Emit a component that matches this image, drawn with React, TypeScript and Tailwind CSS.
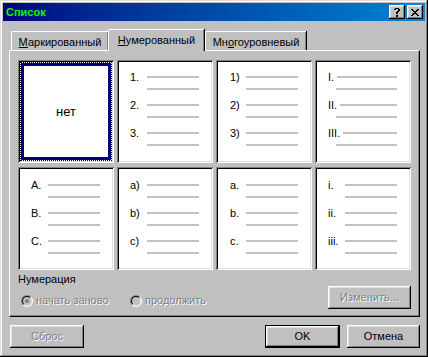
import React from "react";

const raised =
  "shadow-[inset_-1px_-1px_#000,inset_1px_1px_#fff,inset_-2px_-2px_#808080,inset_2px_2px_#dfdfdf]";
const sunken =
  "shadow-[inset_1px_1px_#808080,inset_-1px_-1px_#fff,inset_2px_2px_#000,inset_-2px_-2px_#dfdfdf]";

type CellDef = { labels: string[]; kind: "fixed" | "fixed14" | "roman" };

const cells: CellDef[] = [
  { labels: [], kind: "fixed" },
  { labels: ["1.", "2.", "3."], kind: "fixed" },
  { labels: ["1)", "2)", "3)"], kind: "fixed14" },
  { labels: ["I.", "II.", "III."], kind: "roman" },
  { labels: ["A.", "B.", "C."], kind: "fixed" },
  { labels: ["a)", "b)", "c)"], kind: "fixed" },
  { labels: ["a.", "b.", "c."], kind: "fixed14" },
  { labels: ["i.", "ii.", "iii."], kind: "fixed" },
];

function Bar() {
  return <div className="h-[2px] w-[52px] bg-[#c0c0c0]" />;
}

function ListCell({ def, top }: { def: CellDef; top: boolean }) {
  const pad =
    def.kind === "fixed14"
      ? top
        ? "pl-[14px] pt-[11px]"
        : "pl-[14px] pt-[12px]"
      : top
        ? "pl-[13px] pt-[11px]"
        : "pl-[13px] pt-[12px]";
  return (
    <div className={`h-[103px] w-[96px] bg-white ${sunken} ${pad}`}>
      <div className="flex flex-col gap-[4px]">
        {def.labels.map((l) => (
          <div key={l} className="flex flex-col">
            {def.kind === "roman" ? (
              <>
                <div className="flex h-[12px] w-[69px] items-center">
                  <span className="text-[11px] leading-[12px] text-black">{l}</span>
                  <div className="ml-[3px] h-[2px] flex-1 bg-[#c0c0c0]" />
                </div>
                <div className="flex h-[12px] w-[69px] items-center pl-[8px]">
                  <div className="h-[2px] flex-1 bg-[#c0c0c0]" />
                </div>
              </>
            ) : (
              <>
                <div className="flex h-[12px] items-center">
                  <span
                    className={
                      def.kind === "fixed14"
                        ? "w-[16px] text-[11px] leading-[12px] text-black"
                        : "w-[17px] text-[11px] leading-[12px] text-black"
                    }
                  >
                    {l}
                  </span>
                  <Bar />
                </div>
                <div
                  className={
                    def.kind === "fixed14"
                      ? "flex h-[12px] items-center pl-[16px]"
                      : "flex h-[12px] items-center pl-[17px]"
                  }
                >
                  <Bar />
                </div>
              </>
            )}
          </div>
        ))}
      </div>
    </div>
  );
}

function NoneCell() {
  return (
    <div className={`h-[103px] w-[96px] bg-white p-[2px] ${sunken}`}>
      <div className="h-full w-full border border-dotted border-black">
        <div className="flex h-full w-full items-center justify-center border-[3px] border-[#000080] bg-white">
          <span className="text-[13px] leading-[15px] text-black">нет</span>
        </div>
      </div>
    </div>
  );
}

function Radio({ checked }: { checked: boolean }) {
  return (
    <div className="h-[12px] w-[12px] rounded-full border border-[#808080] border-b-white border-r-white">
      <div className="flex h-full w-full items-center justify-center rounded-full border border-black border-b-[#dfdfdf] border-r-[#dfdfdf] bg-[#c0c0c0]">
        {checked && <div className="h-[4px] w-[4px] rounded-full bg-[#808080]" />}
      </div>
    </div>
  );
}

function CloseGlyph() {
  const px = [
    [0, 0], [1, 0], [6, 0], [7, 0],
    [1, 1], [2, 1], [5, 1], [6, 1],
    [2, 2], [3, 2], [4, 2], [5, 2],
    [3, 3], [4, 3],
    [2, 4], [3, 4], [4, 4], [5, 4],
    [1, 5], [2, 5], [5, 5], [6, 5],
    [0, 6], [1, 6], [6, 6], [7, 6],
  ];
  return (
    <svg width="8" height="7" viewBox="0 0 8 7" shapeRendering="crispEdges">
      {px.map(([x, y]) => (
        <rect key={`${x}-${y}`} x={x} y={y} width="1" height="1" fill="#000" />
      ))}
    </svg>
  );
}

function QuestionGlyph() {
  const px = [
    [1, 0], [2, 0], [3, 0], [4, 0],
    [0, 1], [1, 1], [4, 1], [5, 1],
    [4, 2], [5, 2],
    [3, 3], [4, 3],
    [2, 4], [3, 4],
    [2, 5], [3, 5],
    [2, 7], [3, 7],
    [2, 8], [3, 8],
  ];
  return (
    <svg width="6" height="9" viewBox="0 0 6 9" shapeRendering="crispEdges">
      {px.map(([x, y]) => (
        <rect key={`${x}-${y}`} x={x} y={y} width="1" height="1" fill="#000" />
      ))}
    </svg>
  );
}

export default function App() {
  return (
    <div className="font-['Liberation_Sans',Arial,sans-serif]">
      <div
        className={`flex h-[357px] w-[428px] flex-col bg-[#c0c0c0] p-[3px] shadow-[inset_-1px_-1px_#000,inset_1px_1px_#dfdfdf,inset_-2px_-2px_#808080,inset_2px_2px_#fff]`}
      >
        {/* Title bar */}
        <div className="flex h-[18px] items-center justify-between bg-linear-to-r from-[#000080] to-[#1084d0] pl-[3px] pr-[2px]">
          <span className="text-[11px] font-bold leading-[13px] text-[#00ff00]">Список</span>
          <div className="flex gap-[2px]">
            <div className={`flex h-[14px] w-[16px] items-center justify-center bg-[#c0c0c0] ${raised}`}>
              <QuestionGlyph />
            </div>
            <div className={`flex h-[14px] w-[16px] items-center justify-center bg-[#c0c0c0] ${raised}`}>
              <CloseGlyph />
            </div>
          </div>
        </div>

        {/* Tabs */}
        <div className="ml-[6px] mt-[8px] flex h-[21px] items-end pl-[2px]">
          <div className="flex h-[19px] w-[97px] justify-center rounded-tl-[2px] border-l border-t border-white pt-[4px] shadow-[inset_-1px_0_#808080,1px_0_#000] text-[11px] leading-[13px] text-black">
            <span>
              <span className="underline">М</span>аркированный
            </span>
          </div>
          <div className="relative z-10 -mb-[1px] flex h-[22px] w-[96px] justify-center rounded-tl-[2px] border-l border-t border-white bg-[#c0c0c0] pt-[4px] shadow-[inset_-1px_0_#808080,1px_0_#000] text-[11px] leading-[13px] text-black">
            <span>
              <span className="underline">Н</span>умерованный
            </span>
          </div>
          <div className="ml-[1px] flex h-[19px] w-[101px] justify-center rounded-tl-[2px] border-l border-t border-white pt-[4px] shadow-[inset_-1px_0_#808080,1px_0_#000] text-[11px] leading-[13px] text-black">
            <span>
              Мн<span className="underline">о</span>гоуровневый
            </span>
          </div>
        </div>

        {/* Panel */}
        <div className="ml-[6px] flex h-[267px] w-[411px] flex-col border-b border-l border-r border-t border-white border-b-black border-r-black pl-[8px] pt-[9px] shadow-[inset_-1px_-1px_#808080]">
          <div className="grid w-[393px] grid-cols-[repeat(4,96px)] gap-x-[3px] gap-y-[4px]">
            {cells.map((c, i) =>
              i === 0 ? (
                <NoneCell key={i} />
              ) : (
                <ListCell key={i} def={c} top={i < 4} />
              )
            )}
          </div>
          <div className="mt-[2px] flex w-[393px] justify-between">
            <div className="flex flex-col">
              <span className="h-[14px] text-[11px] leading-[14px] text-black">Нумерация</span>
              <div className="ml-[3px] mt-[8px] flex h-[13px] items-center">
                <div className="flex w-[109px] items-center">
                  <Radio checked />
                  <span className="ml-[3px] text-[11px] leading-[13px] text-[#808080] [text-shadow:1px_1px_0_#fff]">
                    начать заново
                  </span>
                </div>
                <div className="flex items-center">
                  <Radio checked={false} />
                  <span className="ml-[3px] text-[11px] leading-[13px] text-[#808080] [text-shadow:1px_1px_0_#fff]">
                    продолжить
                  </span>
                </div>
              </div>
            </div>
            <div
              className={`mt-[14px] flex h-[23px] w-[83px] items-center justify-center bg-[#c0c0c0] ${raised} text-[11px] leading-[13px] text-[#808080] [text-shadow:1px_1px_0_#fff]`}
            >
              Изменить...
            </div>
          </div>
        </div>

        {/* Bottom buttons */}
        <div className="ml-[7px] mr-[5px] mt-[8px] flex items-start justify-between">
          <div
            className={`flex h-[23px] w-[74px] items-center justify-center bg-[#c0c0c0] ${raised} text-[11px] leading-[13px] text-[#808080] [text-shadow:1px_1px_0_#fff]`}
          >
            Сброс
          </div>
          <div className="flex gap-[7px]">
            <div className="flex h-[23px] w-[75px] items-center justify-center bg-[#c0c0c0] text-[11px] leading-[13px] text-black shadow-[inset_0_0_0_1px_#000,inset_-2px_-2px_#000,inset_2px_2px_#fff,inset_-3px_-3px_#808080,inset_3px_3px_#dfdfdf]">
              OK
            </div>
            <div
              className={`flex h-[23px] w-[73px] items-center justify-center bg-[#c0c0c0] ${raised} text-[11px] leading-[13px] text-black`}
            >
              Отмена
            </div>
          </div>
        </div>
      </div>
    </div>
  );
}
